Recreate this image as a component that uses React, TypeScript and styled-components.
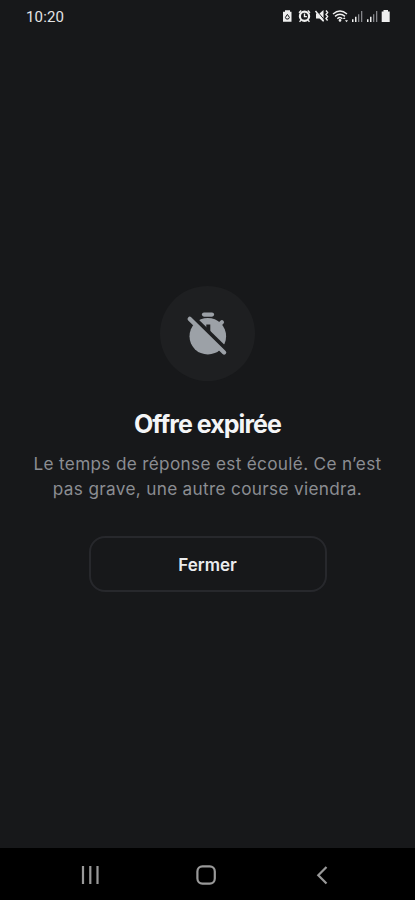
import React from "react";
import styled, { createGlobalStyle } from "styled-components";

const GlobalStyle = createGlobalStyle`
  * { box-sizing: border-box; }
  body { margin: 0; background: #17181a; }
`;

const Screen = styled.div`
  width: 415px;
  height: 900px;
  display: flex;
  flex-direction: column;
  overflow: hidden;
  background: #17181a;
  color: #f4f5f7;
  font-family: Inter, sans-serif;
`;

const StatusBar = styled.header`
  height: 32px;
  flex: none;
  display: flex;
  align-items: center;
  justify-content: space-between;
  padding: 0 24px 0 26px;
`;

const Clock = styled.time`
  padding-top: 1px;
  font: 400 15px/20px Roboto, sans-serif;
  letter-spacing: 0.15px;
  color: #e4e4e5;
`;

const StatusIcons = styled.svg`
  display: block;
  width: 110px;
  height: 16px;
`;

const Content = styled.main`
  flex: 1;
  display: flex;
  flex-direction: column;
  align-items: center;
  padding-top: 254px;
`;

const IconDisc = styled.div`
  width: 95px;
  height: 95px;
  border-radius: 50%;
  background: #1e1f21;
  display: grid;
  place-items: center;
`;

const Title = styled.h1`
  margin: 27px 0 0;
  font-size: 25px;
  line-height: 32px;
  font-weight: 700;
  letter-spacing: -0.95px;
  white-space: nowrap;
`;

const Message = styled.p`
  margin: 11px 0 0;
  font-size: 17.2px;
  line-height: 25px;
  letter-spacing: 0.32px;
  color: #8b8d92;
  text-align: center;
  white-space: nowrap;
`;

const CloseButton = styled.button`
  width: 238px;
  height: 56px;
  margin-top: 35px;
  padding: 1px 0 0;
  border: 2px solid #27282c;
  border-radius: 16px;
  background: transparent;
  color: #ebecee;
  font: 600 17px/24px Inter, sans-serif;
`;

const NavigationBar = styled.nav`
  height: 52px;
  flex: none;
  display: flex;
  align-items: center;
  justify-content: space-between;
  padding: 1px 81px 0 78px;
  background: #000;
`;

const NavIcon = styled.svg`
  display: block;
  width: 24px;
  height: 24px;
  fill: none;
  stroke: #999;
  stroke-width: 2.2;
`;

const TimerOff = () => (
  <svg width="48" height="48" viewBox="0 0 48 48" aria-hidden="true">
    <defs>
      <mask id="timer-cut">
        <rect width="48" height="48" fill="#fff" />
        <path d="M5.5 8.5 9.5 4.5 46.5 40.7 42.5 45Z" fill="#000" />
        <path d="M24.3 14.5v9" stroke="#000" strokeWidth="4" />
      </mask>
    </defs>
    <g mask="url(#timer-cut)" fill="#9ca1a7">
      <circle cx="23.8" cy="26.2" r="18.3" />
      <path d="m34.5 15.5 3.4-3.3" stroke="#9ca1a7" strokeWidth="4.2" strokeLinecap="round" />
    </g>
    <path d="M20 4.6h8" stroke="#9ca1a7" strokeWidth="4.2" strokeLinecap="round" />
    <path d="m5.7 8.9 34.4 33.6" stroke="#9ca1a7" strokeWidth="4.3" strokeLinecap="round" />
  </svg>
);

const App = () => (
  <Screen>
    <GlobalStyle />
    <StatusBar>
      <Clock>10:20</Clock>
      <StatusIcons viewBox="0 0 110 16" fill="#efefef" aria-hidden="true">
        <path d="M4 2.2h5v1.5h1.5v10H2v-10H4z" />
        <path d="m4.4 9.4 2-3 2 3-1 1.6H5.3z" fill="none" stroke="#17181a" strokeWidth="1" />
        <circle cx="23.5" cy="8.3" r="4.6" fill="none" stroke="#efefef" strokeWidth="2.2" />
        <path d="M23.5 5.6v3h2.4M18 4.8 20.2 2.6M26.8 2.6 29 4.8M20 12.3l-1.5 1.5M27 12.3l1.5 1.5" stroke="#efefef" strokeWidth="1.4" fill="none" />
        <path d="M35 5.6h3.5l4-3.6v12l-4-3.6H35z" />
        <path d="m35.8 2.8 8.2 9.8" stroke="#17181a" strokeWidth="1" />
        <path d="m34.5 3 8 10M45 2.5l1.6 2-1.6 2 1.6 2-1.6 2 1.6 2" stroke="#efefef" strokeWidth="1.4" fill="none" />
        <path d="M52 6q7-6 14 0M54 8.4q5-4.4 10 0M56.3 10.8q2.8-2.6 5 0" stroke="#efefef" strokeWidth="1.4" fill="none" />
        <circle cx="59" cy="12.4" r="1.3" />
        <path d="m61.8 11 1.4-1.7 1.4 1.7zM64 12.2h3l-1.5 2z" />
        <path d="M71 11.2h1.5V14H71zM74 8.8h1.5V14H74z M86 11.2h1.5V14H86zM89 8.8h1.5V14H89z" />
        <path d="M77 6.2h1.3V14H77zM80 3h1.3v11H80zM92 6.2h1.3V14H92zM95 3h1.3v11H95z" fill="#85868a" />
        <path d="M102.5 2h4.5v1.5h1.7V14h-8V3.5h1.8z" />
      </StatusIcons>
    </StatusBar>
    <Content>
      <IconDisc><TimerOff /></IconDisc>
      <Title>Offre expirée</Title>
      <Message>Le temps de réponse est écoulé. Ce n’est<br />pas grave, une autre course viendra.</Message>
      <CloseButton type="button">Fermer</CloseButton>
    </Content>
    <NavigationBar>
      <NavIcon viewBox="0 0 24 24" aria-label="Applications récentes"><path d="M5 3v18M12.3 3v18M19.5 3v18" /></NavIcon>
      <NavIcon viewBox="0 0 24 24" aria-label="Accueil"><rect x="3.4" y="3.4" width="17.4" height="17.2" rx="5" /></NavIcon>
      <NavIcon viewBox="0 0 24 24" aria-label="Retour"><path d="m16.5 4-8.2 8.3 8.2 8.2" /></NavIcon>
    </NavigationBar>
  </Screen>
);

export default App;
